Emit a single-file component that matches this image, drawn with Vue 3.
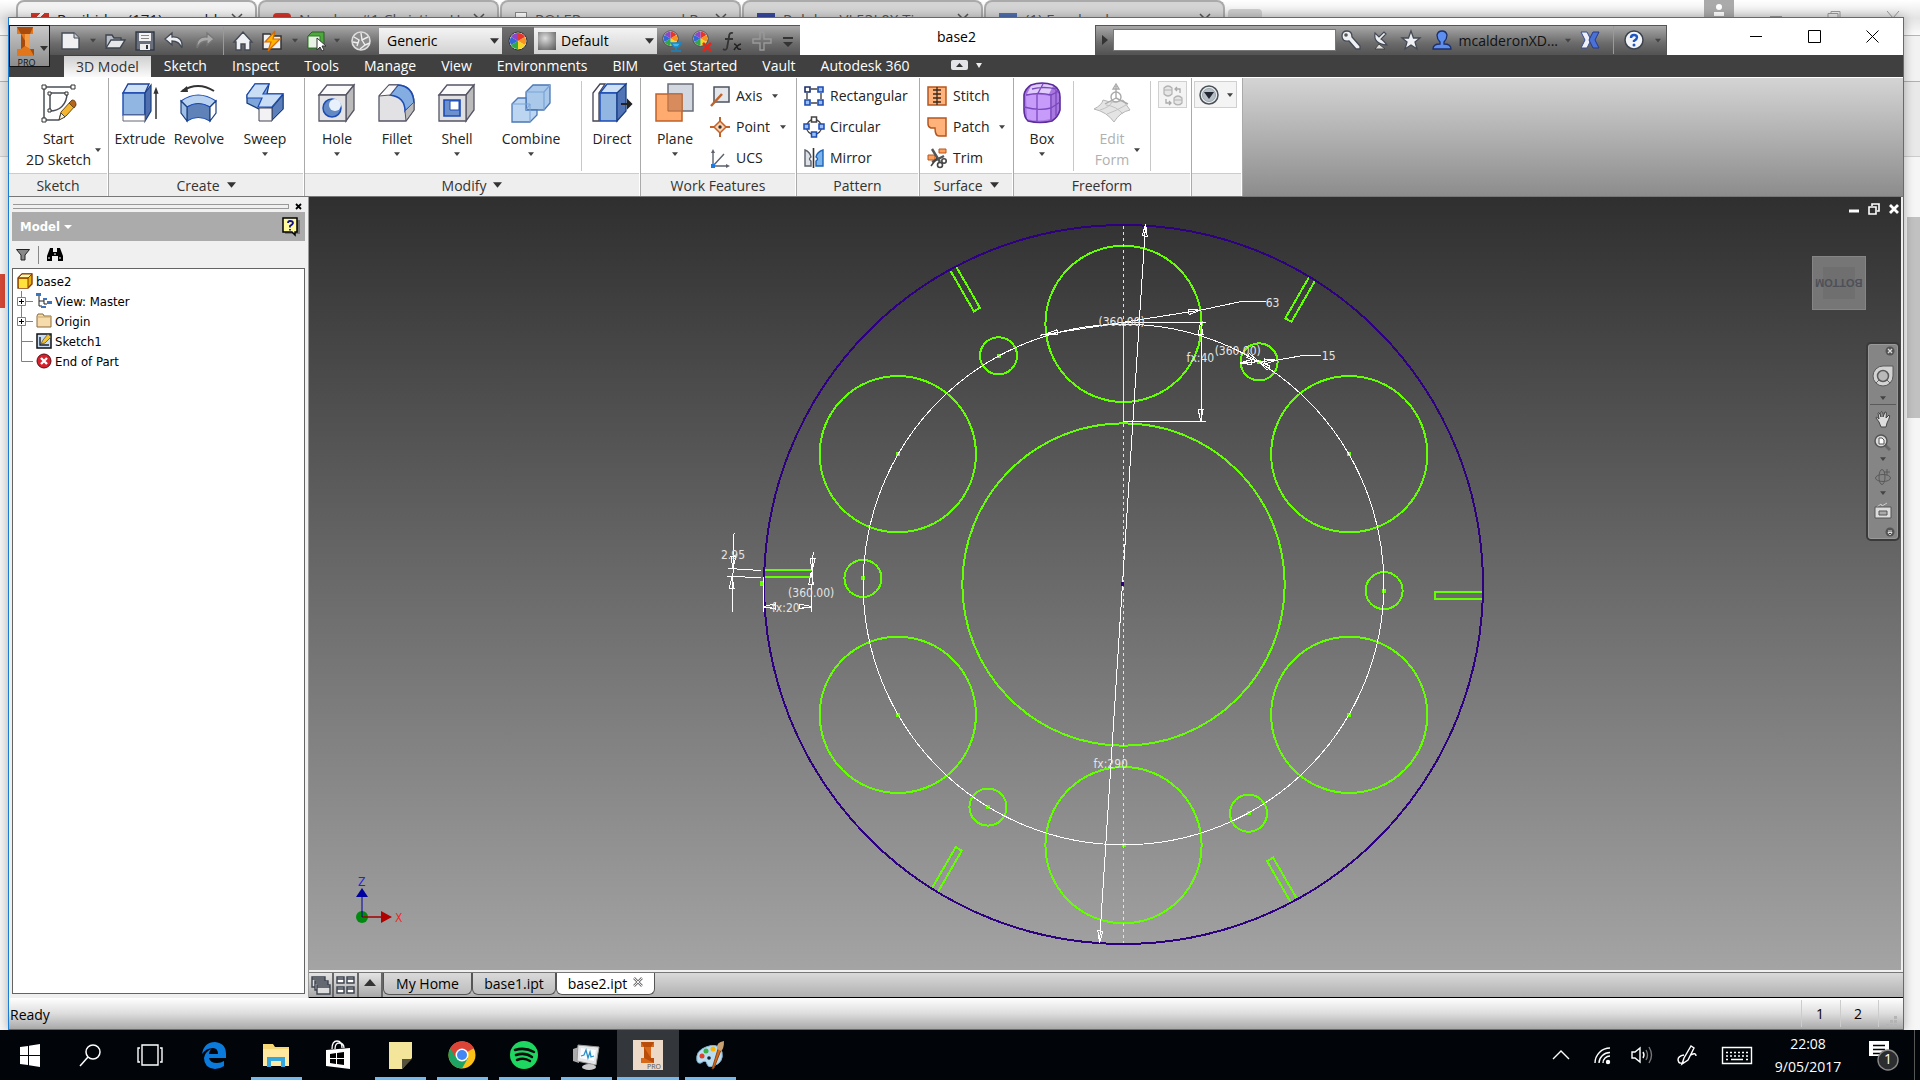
<script setup>
import { ref } from 'vue'

const material = ref('Generic')
const appearance = ref('Default')
const query = ref('')

const icons = {
  start: '<g fill="none" stroke="#4a4f58" stroke-width="1.5"><path d="M5 4H34M5 4V37M5 37H20M11 10H28M11 10V28M11 28C20 28 28 22 28 10"/></g><g fill="#fff" stroke="#333"><path d="M3 2h4v4h-4zM32 2h4v4h-4zM3 35h4v4h-4zM9 9h3v3h-3zM26 9h3v3h-3zM9 26h3v3h-3z"/></g><path d="M20 37l2-8 10-11 5 4-10 11z" fill="#f5b52c" stroke="#6b4a12"/><path d="M30 20l3-3q4 0 4 5l-2 3z" fill="#b5651d" stroke="#6b4a12"/><path d="M20 37l2-7 4 4z" fill="#fff2c8" stroke="#444"/>',
  extrude: '<path d="M3 10L8 1H29L25 10Z" fill="#cfe1f5" stroke="#1c3f9c" stroke-width="1.4"/><path d="M3 10H25V32H3Z" fill="#92b6e2" stroke="#1c4bb5" stroke-width="1.4"/><path d="M25 10L31 2V28L25 38Z" fill="#4f6fae" stroke="#1c3f7c" stroke-width="1.2"/><path d="M3 32H25V38H3Z" fill="#fff" stroke="#667"/><path d="M36 36V7M34.500 10l1.500-4 1.500 4z" stroke="#333" stroke-width="1.5" fill="#333"/>',
  revolve: '<path d="M3 8Q19-2 35 8" fill="none" stroke="#333" stroke-width="2"/><path d="M1 9l7-6 1 6z" fill="#333"/><path d="M2 18Q19 6 37 18L31 24Q19 17 8 24Z" fill="#b9d2ef" stroke="#1c4bb5" stroke-width="1.2"/><path d="M8 24Q19 17 31 24L31 38Q19 31 8 38Z" fill="#5f82b8" stroke="#1c4bb5" stroke-width="1.2"/><path d="M2 18L8 24V38L2 30Z" fill="#9fbfe6" stroke="#1c3f7c" stroke-width="1.2"/><path d="M37 18L31 24V38L37 30Z" fill="#fff" stroke="#1c3f7c" stroke-width="1.2"/>',
  sweep: '<path d="M2 12L10 1H24L22 11H38V26L27 37V25L14 26L2 20Z" fill="#7ea6da" stroke="#1c3f7c" stroke-width="1.3"/><path d="M2 12L10 1H24L18 11H38L27 24H13L17 15H2Z" fill="#c9def5" stroke="#1c4bb5" stroke-width="1.2"/><path d="M27 25L38 12V26L27 37Z" fill="#5b7fbb" stroke="#1c3f7c"/><path d="M14 25H27V38H14Z" fill="#f2f2f4" stroke="#445"/>',
  hole: '<path d="M2 12L10 2H37L29 12Z" fill="#fafafa" stroke="#556" stroke-width="1.3"/><path d="M29 12L37 2V27L29 38Z" fill="#bbb" stroke="#556" stroke-width="1.3"/><path d="M2 12H29V38H2Z" fill="#e4e4e6" stroke="#556" stroke-width="1.3"/><circle cx="15" cy="25" r="9" fill="#6289c4" stroke="#1c4bb5" stroke-width="1.5"/><circle cx="18" cy="22" r="6" fill="#e8f1fb"/>',
  fillet: '<path d="M2 13L12 2H20Q37 3 37 20V27L29 38H2Z" fill="#e2e2e4" stroke="#556" stroke-width="1.3"/><path d="M13 12L21 2Q36 3 37 20L28 28Q28 14 13 12Z" fill="#84aee2" stroke="#1c4bb5" stroke-width="1.5"/><path d="M28 28L37 19V27L29 38Z" fill="#bbb" stroke="#556"/><path d="M2 13L12 2H21L13 12Z" fill="#fafafa" stroke="#556"/>',
  shell: '<path d="M2 12L10 2H37L29 12Z" fill="#fafafa" stroke="#556" stroke-width="1.3"/><path d="M29 12L37 2V27L29 38Z" fill="#bbb" stroke="#556" stroke-width="1.3"/><path d="M2 12H29V38H2Z" fill="#e0e0e3" stroke="#556" stroke-width="1.3"/><path d="M7 17H23V33H7Z" fill="#6c90cc" stroke="#1c4bb5" stroke-width="1.6"/><path d="M13 18H22V27H13Z" fill="#fff" stroke="#1c4bb5"/>',
  combine: '<path d="M15 9L22 2H39V20L33 27H15Z" fill="#a9c8ea" stroke="#4b77b5" stroke-width="1.3"/><path d="M15 9H33V27M33 9L39 2" fill="none" stroke="#7ba3d6" stroke-width="1.2"/><path d="M1 21L7 15H15V27H26V32L19 39H1Z" fill="#bcd5f0" stroke="#4b77b5" stroke-width="1.3"/><path d="M1 21H19V39M19 21L15 27" fill="none" stroke="#7ba3d6"/>',
  direct: '<path d="M1 10L8 1H13L7 10V38H1Z" fill="#fff" stroke="#445" stroke-width="1.3"/><path d="M8 10L15 1H34L29 10Z" fill="#cfe1f5" stroke="#1c4bb5" stroke-width="1.4"/><path d="M8 10H25V38H8Z" fill="#92b6e2" stroke="#1c4bb5" stroke-width="1.4"/><path d="M25 10L34 1V28L25 38Z" fill="#5074b5" stroke="#1c3f7c" stroke-width="1.3"/><path d="M29 21H36M36 18l3 3-3 3z" stroke="#222" stroke-width="2.2" fill="#222"/>',
  plane: '<path d="M13 1H38V28H13Z" fill="#d3d7df" stroke="#6a6e78" stroke-width="1.5"/><path d="M1 11H27V38H1Z" fill="#ff9f5c" fill-opacity=".88" stroke="#c0622a" stroke-width="1.5"/><path d="M13 11H27V28H13Z" fill="#d88c5e" stroke="#b06a40"/>',
  box: '<path d="M9 2Q20-2 31 2Q38 6 38 14V27Q36 34 30 38Q18 41 6 38Q2 34 2 27V12Q3 6 9 2Z" fill="#a878e0" stroke="#5b2c9c" stroke-width="1.6"/><path d="M9 3Q20-1 31 3L27 11H5Z" fill="#e0ccfa"/><path d="M4 13Q15 10 28 13V36Q16 39 5 36Z" fill="#c79bfa"/><path d="M2 24Q17 28 29 25L38 19M15 12V38M29 11V37M4 12Q18 9 29 12L37 8M15 12L21 1M10 6Q22 3 34 6M34 7V33" fill="none" stroke="#7a48bd" stroke-width="1.3"/>',
  form: '<path d="M2 26Q10 22 11 17Q22 21 31 17L38 27Q28 29 22 39Q15 29 2 26Z" fill="#e4e4e4" stroke="#b5b5b5"/><path d="M8 27Q18 24 20 19M31 31Q24 23 14 22M15 31Q24 28 34 22" fill="none" stroke="#c2c2c2"/><g fill="none" stroke="#aaa" stroke-width="1.4"><path d="M24 15V3M21 6l3-5 3 5zM24 15L13 21M24 15L36 21"/><circle cx="24" cy="14" r="5"/></g>',
  axis: '<path d="M4 1H19V16H4Z" fill="#e3e6ea" stroke="#4d545f" stroke-width="1.5"/><path d="M1 20L12 8" stroke="#c0622a" stroke-width="2.5"/>',
  point: '<path d="M10 4L16 10L10 16L4 10Z" fill="#ffd3b0" stroke="#c0622a" stroke-width="1.5"/><path d="M10 0V5M10 15V20M0 10H5M15 10H20" stroke="#c0622a" stroke-width="2"/><circle cx="10" cy="10" r="1.7" fill="#333"/>',
  ucs: '<path d="M3 18V3M3 18H18M3 18L14 6" fill="none" stroke="#5b626d" stroke-width="1.4"/><path d="M1 5l2-4 2 4zM16 16l4 2-4 2z" fill="#5b626d"/><path d="M1 16H5V20H1Z" fill="#1d7ae0"/>',
  rectangular: '<path d="M7 3H13M3 7V13M17 7V13M7 17H13" stroke="#444" stroke-width="1.4"/><g fill="#fff" stroke="#1c4bb5" stroke-width="1.6"><path d="M1 1H6V6H1Z" stroke="#1b2e6b"/><path d="M14 1H19V6H14ZM1 14H6V19H1ZM14 14H19V19H14Z" fill="#9cc0ee"/></g>',
  circular: '<circle cx="10" cy="10" r="7.5" fill="none" stroke="#444" stroke-width="1.3"/><g fill="#9cc0ee" stroke="#1c4bb5" stroke-width="1.5"><path d="M7.500 0H12.500V5H7.500Z" fill="#fff" stroke="#444"/><path d="M0 7H5V12H0ZM15 7H20V12H15ZM7.500 15H12.500V20H7.500Z"/></g>',
  mirror: '<path d="M1 2Q6 4 7 9Q4 11 7 13V18H1Z" fill="#dde0e4" stroke="#59606b" stroke-width="1.4"/><path d="M19 2Q13 4 12 9Q15 11 12 13V18H19Z" fill="#7cb4ec" stroke="#1c62b5" stroke-width="1.4"/><path d="M9.500 0V20" stroke="#333" stroke-width="1.6"/>',
  stitch: '<path d="M1 1H19V19H1Z" fill="#ffb27a" stroke="#b5561e" stroke-width="1.5"/><path d="M10 1V19M6 4H14M6 8H14M6 12H14M6 16H14" stroke="#3b2a1e" stroke-width="1.3"/>',
  patch: '<path d="M1 1H19V19H12Q8 19 8 11H4Q1 10 1 7Z" fill="#ffb27a" stroke="#b5561e" stroke-width="1.5"/>',
  trim: '<path d="M12 1H19V5H12ZM1 7H8V12H1Z" fill="#ff9f5c" stroke="#b5561e"/><path d="M5 1L13 14M17 8L5 14" stroke="#555" stroke-width="2.4"/><g fill="none" stroke="#444" stroke-width="1.6"><circle cx="13" cy="17" r="2.500"/><circle cx="17" cy="13" r="2.200"/><path d="M4 18L10 10"/></g>',
  convert: '<g fill="#e6e6e6" stroke="#b3b3b3" stroke-width="1.2"><path d="M1 3Q5-1 9 3V9Q5 13 1 9ZM1 5H9M11 13Q15 9 19 13V18Q15 22 11 18ZM11 15H19"/></g><path d="M12 4H17V8M14 2L12 4L14 6M3 14V18H8M6 16L8 18L6 20" fill="none" stroke="#aaa" stroke-width="1.3"/>',
  filterdown: '<circle cx="10" cy="10" r="9" fill="#e8ebef" stroke="#4a5058" stroke-width="1.5"/><circle cx="10" cy="10" r="6.500" fill="#b9bfc8" stroke="#9aa"/><path d="M5 7H15L10 14Z" fill="#222833"/>',
  new: '<path d="M2 2H14L19 7V18H2Z" fill="#f0f0f2" stroke="#444a55" stroke-width="1.4"/><path d="M14 2V7H19" fill="#c9ccd2" stroke="#444a55"/>',
  open: '<path d="M1 16V4H7L9 7H16V9" fill="#b9bdc6" stroke="#3e444f" stroke-width="1.4"/><path d="M1 17L6 9H20L15 17Z" fill="#e5e7eb" stroke="#3e444f" stroke-width="1.4"/>',
  save: '<path d="M1 1H19V19H1Z" fill="#6a707b" stroke="#333a45" stroke-width="1.4"/><path d="M4 2H16V10H4Z" fill="#f3f3f3"/><path d="M6 4.500H14M6 7.500H14" stroke="#888"/><path d="M5 13H15V19H5Z" fill="#eee"/><path d="M11 14H13V18H11Z" fill="#333"/>',
  undo: '<path d="M1 8L8 2V6Q19 5 18 17Q15 10 8 10V14Z" fill="#eef0f3" stroke="#444a55" stroke-width="1.3"/>',
  redo: '<path d="M19 8L12 2V6Q1 5 2 17Q5 10 12 10V14Z" fill="#a9a9a9" stroke="#777" stroke-width="1.3"/>',
  home: '<path d="M1 11L10 1L19 11H17V19H12V13H8V19H3V11Z" fill="#f0f1f4" stroke="#444a55" stroke-width="1.4"/>',
  bolt: '<path d="M1 3H8L10 5H19V18H1Z" fill="#f1f1f1" stroke="#333" stroke-width="1.500"/><path d="M13 0L3 11H9L6 20L18 8H11Z" fill="#ffb400" stroke="#d46a00" stroke-width="1.2"/>',
  pick: '<path d="M1 5L5 1H17V13L13 17H1Z" fill="#4caa3c" stroke="#2b5c22"/><path d="M1 5H13V17H1Z" fill="#e8f2e5" stroke="#2b7c22"/><path d="M10 7V19L13 16L15 20L17 19L15 15H19Z" fill="#fff" stroke="#333"/>',
  sphere: '<circle cx="10" cy="10" r="9" fill="#8d8d8d" stroke="#ddd" stroke-width="1.6"/><path d="M3 6L8 9L6 15M10 2L11 9L17 6M11 9L14 14L9 18M14 14L19 12M2 11L7 12" stroke="#eee" stroke-width="1.4" fill="none"/>',
  wheel: '<circle cx="10" cy="10" r="9" fill="#eee" stroke="#333"/><path d="M10 10V2A8 8 0 0 1 17 6Z" fill="#e8342a"/><path d="M10 10L17 6A8 8 0 0 1 17 14Z" fill="#f8941e"/><path d="M10 10L17 14A8 8 0 0 1 10 18Z" fill="#f5d623"/><path d="M10 10V18A8 8 0 0 1 3 14Z" fill="#2fa845"/><path d="M10 10L3 14A8 8 0 0 1 3 6Z" fill="#3467d6"/><path d="M10 10L3 6A8 8 0 0 1 10 2Z" fill="#8c46c8"/>',
  fx: '<path d="M11 2Q7 1 7 6L5 17Q4 20 1 18M3 8H11" stroke="#333" stroke-width="1.8" fill="none"/><path d="M12 13Q14 13 15 16Q16 19 19 18M19 13Q15 14 12 19" stroke="#222" stroke-width="1.5" fill="none"/>',
  plus: '<path d="M8 1H12V8H19V12H12V19H8V12H1V8H8Z" fill="none" stroke="#999" stroke-width="1.4"/>',
  overflow: '<path d="M5 6H15V8H5ZM5 11H15L10 16Z" fill="#333"/>',
  key: '<path d="M1 6Q1 1 6 1Q11 1 11 7L19 16V19H15L8 11Q1 12 1 6Z" fill="#eef0f3" stroke="#444a55" stroke-width="1.3"/><circle cx="5" cy="5" r="1.800" fill="#555"/>',
  dish: '<path d="M4 3Q2 14 16 15Q12 10 10 9L15 4L13 2L8 7Z" fill="#eef0f3" stroke="#444a55" stroke-width="1.2"/><path d="M4 19L8 14L14 19Z" fill="#ddd" stroke="#444"/>',
  star: '<path d="M10 1L12.500 8H19L14 12L16 19L10 15L4 19L6 12L1 8H7.500Z" fill="#eef0f3" stroke="#444a55" stroke-width="1.3"/>',
  user: '<path d="M1 19Q1 14 8 14V12Q5 9 5 5Q6 1 10 1Q14 1 15 5Q15 9 12 12V14Q19 14 19 19Z" fill="#5c8ff0" stroke="#1c2f6c" stroke-width="1.3"/>',
  exchange: '<path d="M1 2H7L11 10L7 18H1L5 10Z" fill="#eef0f6" stroke="#334b94"/><path d="M19 2H13L9 10L13 18H19L15 10Z" fill="#4a72d6" stroke="#24398a"/>',
  help: '<circle cx="10" cy="10" r="9" fill="#f3f5f8" stroke="#3c424d" stroke-width="1.5"/><path d="M7 8Q7 5 10 5Q13 5 13 7.500Q13 9 10 11V12" stroke="#1f55c0" stroke-width="2.400" fill="none"/><circle cx="10" cy="15" r="1.500" fill="#1f55c0"/>',
  part: '<path d="M1 5L5 1H15V11L11 15H1Z" fill="#e8b400" stroke="#8c3a00" stroke-width="1.400"/><path d="M1 5L5 1H15L11 5Z" fill="#fff8b0" stroke="#8c3a00"/><path d="M2 6H11V15H2Z" fill="#ffe23c"/><path d="M11 5V15M1 5H11" stroke="#8c3a00" fill="none"/>',
  view: '<path d="M1 1H5M3 2V13H6M3 8H8M8 6V11M8 11H11" stroke="#222" fill="none"/><path d="M0 0H5V3H0ZM7 5H11V7H7ZM11 8H16V11H11ZM5 13H10V15H5Z" fill="#3c74c0"/>',
  folder: '<path d="M1 14V3L2 1H7L8 3H15V14Z" fill="#f5dcaa" stroke="#8c6a3c"/><path d="M1 4H15" stroke="#c9a56a"/>',
  sketch: '<path d="M1 1H15V15H1Z" fill="#c9dcf5" stroke="#111" stroke-width="1.500"/><path d="M4 4V12H13" stroke="#222" fill="none" stroke-width="1.400"/><path d="M5 11L7 7L12 1L15 4L9 10Z" fill="#f5c52c" stroke="#555" stroke-width=".800"/>',
  end: '<circle cx="8" cy="8" r="7" fill="#d8202c" stroke="#5a0d14"/><path d="M5 5L11 11M11 5L5 11" stroke="#fff" stroke-width="2.400"/>',
}

const caret = 'M0 0H8L4 5Z'

const menuTabs = ['3D Model', 'Sketch', 'Inspect', 'Tools', 'Manage', 'View', 'Environments', 'BIM', 'Get Started', 'Vault', 'Autodesk 360']

const quick = [
  { i: 'new', w: 40, label: 'New' }, { caret: true, w: 6, label: 'New menu' },
  { i: 'open', w: 38, label: 'Open' }, { i: 'save', w: 22, label: 'Save' },
  { i: 'undo', w: 36, label: 'Undo' }, { i: 'redo', w: 25, label: 'Redo' }, { sep: true, w: 12 },
  { i: 'home', w: 28, label: 'Home' }, { i: 'bolt', w: 30, label: 'Local Update' }, { caret: true, w: 16, label: 'Update menu' },
  { i: 'pick', w: 28, label: 'Select' }, { caret: true, w: 12, label: 'Select menu' }, { i: 'sphere', w: 36, label: 'Material' },
]

const panels = [
  { name: 'Sketch', w: 100, big: [{ i: 'start', t: ['Start', '2D Sketch'], w: 100, side: true }] },
  { name: 'Create', w: 196, more: true, pad: 4, big: [{ i: 'extrude', t: ['Extrude'], w: 54 }, { i: 'revolve', t: ['Revolve'], w: 64 }, { i: 'sweep', t: ['Sweep'], w: 68, arrow: true }] },
  { name: 'Modify', w: 336, more: true, pad: 2, big: [{ i: 'hole', t: ['Hole'], w: 60, arrow: true }, { i: 'fillet', t: ['Fillet'], w: 60, arrow: true }, { i: 'shell', t: ['Shell'], w: 60, arrow: true }, { i: 'combine', t: ['Combine'], w: 88, arrow: true }, { sep: true, apart: true }, { i: 'direct', t: ['Direct'], w: 54 }] },
  { name: 'Work Features', w: 156, pad: 2, big: [{ i: 'plane', t: ['Plane'], w: 64, arrow: true }], small: [{ i: 'axis', t: 'Axis', arrow: true }, { i: 'point', t: 'Point', arrow: true }, { i: 'ucs', t: 'UCS' }] },
  { name: 'Pattern', w: 123, pad: 4, small: [{ i: 'rectangular', t: 'Rectangular' }, { i: 'circular', t: 'Circular' }, { i: 'mirror', t: 'Mirror' }] },
  { name: 'Surface', w: 94, more: true, pad: 4, small: [{ i: 'stitch', t: 'Stitch' }, { i: 'patch', t: 'Patch', arrow: true }, { i: 'trim', t: 'Trim' }] },
  { name: 'Freeform', w: 178, pad: 0, big: [{ i: 'box', t: ['Box'], w: 56, arrow: true }, { sep: true }, { i: 'form', t: ['Edit', 'Form'], w: 70, side: true, off: true }, { sep: true }], tool: 'convert' },
  { name: '', w: 51, pad: 2, tool: 'filterdown', toolArrow: true },
]

const tree = [
  { i: 'view', t: 'View: Master', plus: true },
  { i: 'folder', t: 'Origin', plus: true },
  { i: 'sketch', t: 'Sketch1' },
  { i: 'end', t: 'End of Part', last: true },
]

const CX = 1124
const CY = 585
const turn = (r, deg) => ({ x: CX + r * Math.cos(deg * Math.PI / 180), y: CY + r * Math.sin(deg * Math.PI / 180) })
const steps = [0, 60, 120, 180, 240, 300]
const bigHoles = steps.map(a => turn(260.3, a + 30))
const smallHoles = steps.map(a => turn(260.3, a + 1.34))

const arrows = [
  [1146, 225, -86], [1100, 943, 94], [1046, 335, 171], [1201, 311, -9],
  [1201, 323, -90], [1201, 422, 90], [1240, 364, 174], [1277, 361, -6],
  [1259, 362, 28], [1259, 362, 215], [734, 569, 92], [733, 577, -88],
  [813, 571, 92], [812, 573, -90], [764, 607, 180], [812, 607, 0],
]
const notes = [
  ['63', 1266, 308], ['15', 1322, 361], ['(360.00)', 1099, 327], ['(360.00)', 1215, 356],
  ['fx:40', 1187, 363], ['fx:290', 1094, 768], ['2.95', 722, 560], ['(360.00)', 789, 597], ['fx:20', 773, 612],
]

const backTabs = [
  { t: 'Recibidos (171) - mcalde', on: true, c: 'gmail' },
  { t: 'Number #1 Christian Hits', c: 'yt' },
  { t: 'POLER - surseo coord Rol', c: 'doc' },
  { t: 'Pololu - VL53L0X Time-of', c: 'pol' },
  { t: '(1) Facebook', c: 'fb' },
]

const apps = [
  { n: 'Start', s: '<path d="M1 6L9 5V14H1ZM10 4.800L21 3V14H10ZM1 15H9V24L1 23ZM10 15H21V26L10 24.200Z" fill="#fff" transform="translate(3 0)"/>', w: 60 },
  { n: 'Search', s: '<circle cx="17" cy="11" r="7" fill="none" stroke="#fff" stroke-width="1.500"/><path d="M12 16L4 25" stroke="#fff" stroke-width="1.500"/>', w: 60 },
  { n: 'Task View', s: '<path d="M6 4H22V24H6ZM4 7H2V21H4M24 7H26V21H24" fill="none" stroke="#fff" stroke-width="1.400"/>', w: 60 },
  { n: 'Edge', s: '<path d="M2 13Q4 1 15 1Q26 2 26 13V17H9Q10 22 17 22Q21 22 24 20V25Q20 28 15 28Q4 27 4 17Q5 11 11 8Q9 11 9 13H18Q18 7 13 7Q6 7 2 13Z" fill="#0a7bdc"/>' },
  { n: 'File Explorer', run: true, s: '<path d="M1 3H11L13 6H27V25H1Z" fill="#f7d774"/><path d="M1 8H27V25H1Z" fill="#ffe9a0"/><path d="M5 26V16H23V26H19V20H9V26Z" fill="#35a7e0"/>' },
  { n: 'Store', s: '<path d="M2 9L26 7V28L2 25Z" fill="#fff"/><path d="M8 8Q8 0 13 0Q18 0 18 7M11 8Q11 2 15 2Q20 2 20 7" fill="none" stroke="#fff" stroke-width="1.300"/><path d="M6 13L12 12V17H6ZM13 12L20 11V17H13ZM6 18H12V23L6 22ZM13 18H20V24L13 23Z" fill="#000"/>' },
  { n: 'Sticky Notes', run: true, s: '<path d="M3 1H26V17L16 28H3Z" fill="#f3e69a"/><path d="M16 28V18H26Z" fill="#55513a"/>' },
  { n: 'Chrome', run: true, s: '<circle cx="14" cy="14" r="13.500" fill="#fbc116"/><path d="M14 14L2.300 7.300A13.500 13.500 0 0 1 25.700 7.300Z" fill="#db4437"/><path d="M14 14L2.300 7.300A13.500 13.500 0 0 0 14 27.500L20 17Z" fill="#1da462"/><path d="M14 7.500H26A13.500 13.500 0 0 0 2.300 7.300L8 17A6.500 6.500 0 0 1 14 7.500Z" fill="#db4437"/><circle cx="14" cy="14" r="6.500" fill="#fff"/><circle cx="14" cy="14" r="5" fill="#4486f4"/>' },
  { n: 'Spotify', run: true, s: '<circle cx="14" cy="14" r="14" fill="#1ed760"/><path d="M5 9Q15 6 24 11M6 14Q15 11 22 16M7 19Q14 16 20 20" fill="none" stroke="#0b0b0b" stroke-width="2.500" stroke-linecap="round"/>' },
  { n: 'Monitor', run: true, s: '<path d="M1 8L7 6V22L1 20Z" fill="#aaa"/><path d="M6 4L27 6L24 24L5 20Z" fill="#e4e6e8" stroke="#999"/><path d="M9 7L24 9L22 20L8 17Z" fill="#f8fbff"/><path d="M9 15L12 14L14 9L16 17L18 11L19 16L22 15" fill="none" stroke="#2a8ec8" stroke-width="1.300"/><ellipse cx="17" cy="26" rx="7" ry="3" fill="#ccc"/>' },
  { n: 'Inventor', run: true, active: true, s: '<path d="M-1-1H29V29H-1Z" fill="#ecd9c8"/><path d="M7 1H20V6H17V17H20V22H7V17H10V6H7Z" fill="#d9691a"/><path d="M7 1L10 6H17L20 1ZM10 6L17 17H20V22L10 17Z" fill="#b84c0a"/>', pro: true },
  { n: 'Paint', run: true, s: '<path d="M1 20Q-1 10 10 6Q22 1 26 11Q28 22 17 25Q12 27 11 23Q10 18 5 22Q2 23 1 20Z" fill="#b9dcf0" stroke="#7fb2d0"/><circle cx="6" cy="15" r="2.500" fill="#e0402c"/><circle cx="10" cy="10" r="2.500" fill="#3cb043"/><circle cx="17" cy="8" r="2.500" fill="#ffb400"/><circle cx="13" cy="17" r="1.800" fill="#123"/><path d="M16 28L22 8L25 9L18 27Z" fill="#d9691a" stroke="#8c4510"/><path d="M21 8Q20 1 28 0Q28 8 25 10Z" fill="#c9a070"/>' },
]
</script>

<template>
  <div class="desktop">
    <div class="back" aria-hidden="true">
      <div class="back-tabs">
        <div v-for="b in backTabs" :key="b.t" class="back-tab" :class="{ on: b.on }">
          <i class="fav" :class="b.c"></i><span class="bt">{{ b.t }}</span><svg class="bx" width="12" height="12" viewBox="0 0 12 12"><path d="M1 1L11 11M11 1L1 11" stroke="#555" stroke-width="1.500" /></svg>
        </div>
        <div class="back-new"></div>
        <div class="back-fill"></div>
        <div class="back-user"><svg width="12" height="12" viewBox="0 0 12 12"><circle cx="6" cy="3" r="3" fill="#fff" /><path d="M1 12V8H11V12Z" fill="#fff" /></svg></div>
        <svg class="back-ctl" width="140" height="20" viewBox="0 0 140 20" fill="none" stroke="#999"><path d="M0 16.500H12M58 20V13.500H68V20M61 13V11.500H70V20M117 11L123 18L129 11" /></svg>
      </div>
      <div class="back-bar"></div><div class="back-bar two"></div><div class="back-page"><i class="mark"></i><i class="thumb"></i></div>
    </div>

    <div class="win">
      <header class="title">
        <button class="app-btn" aria-label="Application menu">
          <svg width="22" height="32" viewBox="0 0 22 32"><path d="M1 1H17V8H14V23H18V30H1V23H5V8H1Z" fill="#e2761b" /><path d="M1 1L5 8H14L17 1ZM5 8L14 23L18 30V23H14L9 20L5 23Z" fill="#a84a0c" /><path d="M9 8H14V23L9 20Z" fill="#f59a45" /></svg>
          <span>PRO</span>
          <svg class="app-caret" width="8" height="5"><path :d="caret" fill="#333" /></svg>
        </button>
        <div class="qat">
          <template v-for="(q, n) in quick" :key="n">
            <i v-if="q.sep" class="qsep"></i>
            <button v-else class="qb" :style="{ width: q.w + 'px' }" :aria-label="q.label">
              <svg v-if="q.caret" width="6" height="5" viewBox="0 0 8 5"><path :d="caret" fill="#444" /></svg>
              <svg v-else width="20" height="20" viewBox="0 0 20 20" v-html="icons[q.i]"></svg>
            </button>
          </template>
          <label class="combo"><select v-model="material" aria-label="Material"><option>Generic</option></select><svg width="9" height="6" viewBox="0 0 8 5"><path :d="caret" fill="#333" /></svg></label>
          <button class="qb dark" aria-label="Appearance"><svg width="20" height="20" viewBox="0 0 20 20" v-html="icons.wheel"></svg></button>
          <label class="combo ball"><i class="orb"></i><select v-model="appearance" aria-label="Appearance"><option>Default</option></select><svg width="9" height="6" viewBox="0 0 8 5"><path :d="caret" fill="#333" /></svg></label>
          <button class="qb w30" aria-label="Adjust"><svg width="20" height="22" viewBox="0 0 20 22"><g transform="scale(.85)" v-html="icons.wheel"></g><path d="M9 13H19L16 17H12ZM14 17V20M9 21H19" fill="#4ab8ea" stroke="#1488c8" stroke-width="1.500" /></svg></button>
          <button class="qb w30" aria-label="Clear"><svg width="20" height="22" viewBox="0 0 20 22"><g transform="scale(.85)" v-html="icons.wheel"></g><path d="M11 13L19 21M19 13L11 21" stroke="#e0281c" stroke-width="2.500" /></svg></button>
          <button class="qb w30" aria-label="Parameters"><svg width="20" height="20" viewBox="0 0 20 20" v-html="icons.fx"></svg></button>
          <button class="qb w30" aria-label="Add"><svg width="20" height="20" viewBox="0 0 20 20" v-html="icons.plus"></svg></button>
          <button class="qb w22" aria-label="Customize"><svg width="20" height="20" viewBox="0 0 20 20" v-html="icons.overflow"></svg></button>
        </div>
        <h1>base2</h1>
        <div class="info">
          <button class="qb w16" aria-label="Expand"><svg width="6" height="10"><path d="M0 0L6 5L0 10Z" fill="#333" /></svg></button>
          <input v-model="query" class="search" aria-label="Search" />
          <button class="qb w30" aria-label="Sign key"><svg width="20" height="20" viewBox="0 0 20 20" v-html="icons.key"></svg></button>
          <button class="qb w30" aria-label="Communication"><svg width="20" height="20" viewBox="0 0 20 20" v-html="icons.dish"></svg></button>
          <button class="qb w30" aria-label="Favourites"><svg width="20" height="20" viewBox="0 0 20 20" v-html="icons.star"></svg></button>
          <button class="qb user"><svg width="20" height="20" viewBox="0 0 20 20" v-html="icons.user"></svg><span>mcalderonXD...</span><svg width="6" height="5" viewBox="0 0 8 5"><path :d="caret" fill="#444" /></svg></button>
          <button class="qb w34" aria-label="Exchange"><svg width="20" height="20" viewBox="0 0 20 20" v-html="icons.exchange"></svg></button>
          <i class="qsep"></i>
          <button class="qb w30" aria-label="Help"><svg width="20" height="20" viewBox="0 0 20 20" v-html="icons.help"></svg></button>
          <button class="qb w16" aria-label="Help menu"><svg width="6" height="5" viewBox="0 0 8 5"><path :d="caret" fill="#444" /></svg></button>
        </div>
        <div class="ctl">
          <button aria-label="Minimize"><svg width="13" height="13"><path d="M0 6.500H12" /></svg></button>
          <button aria-label="Maximize"><svg width="13" height="13"><path d="M.5 .5H12.500V12.500H.5Z" /></svg></button>
          <button aria-label="Close"><svg width="13" height="13"><path d="M.5 .5L12.500 12.500M12.500 .5L.5 12.500" /></svg></button>
        </div>
      </header>

      <nav class="menu">
        <button v-for="(m, n) in menuTabs" :key="m" :class="{ on: n === 0 }">{{ m }}</button>
        <button class="mini" aria-label="Ribbon display"><svg width="32" height="10"><rect x="0" y="0" width="17" height="10" rx="2" fill="#e4e4e8" /><path d="M5 7L8.500 3L12 7Z" fill="#333" /><path d="M25 3H31L28 8Z" fill="#eee" /></svg></button>
      </nav>

      <section class="ribbon">
        <div v-for="(p, n) in panels" :key="n" class="panel" :style="{ width: p.w + 'px' }">
          <div class="body" :style="{ paddingLeft: (p.pad || 0) + 'px' }">
            <template v-for="(b, k) in p.big || []" :key="k">
              <i v-if="b.sep" class="bsep" :class="{ apart: b.apart }"></i>
              <button v-else class="big" :class="{ off: b.off }" :style="{ width: b.w + 'px' }">
                <svg width="40" height="40" viewBox="0 0 40 40" v-html="icons[b.i]"></svg>
                <span v-for="t in b.t" :key="t">{{ t }}</span>
                <svg v-if="b.arrow || b.side" :class="b.side ? 'side' : 'under'" width="6" height="4" viewBox="0 0 8 5"><path :d="caret" fill="#444" /></svg>
              </button>
            </template>
            <div v-if="p.small" class="stack">
              <button v-for="s in p.small" :key="s.t" class="small">
                <svg width="20" height="20" viewBox="0 0 20 20" v-html="icons[s.i]"></svg><span>{{ s.t }}</span>
                <svg v-if="s.arrow" width="6" height="4" viewBox="0 0 8 5"><path :d="caret" fill="#444" /></svg>
              </button>
            </div>
            <button v-if="p.tool" class="tool" :class="{ wide: p.toolArrow }" :aria-label="p.tool">
              <svg width="20" height="20" viewBox="0 0 20 20" v-html="icons[p.tool]"></svg>
              <svg v-if="p.toolArrow" width="6" height="4" viewBox="0 0 8 5"><path :d="caret" fill="#444" /></svg>
            </button>
          </div>
          <div class="name">{{ p.name }}<svg v-if="p.more" width="9" height="6" viewBox="0 0 8 5"><path :d="caret" fill="#333" /></svg></div>
        </div>
      </section>

      <main class="work">
        <aside class="browser">
          <div class="grip"><i></i><button aria-label="Close panel"><svg width="7" height="7"><path d="M1 1L6 6M6 1L1 6" stroke="#000" stroke-width="1.800" /></svg></button></div>
          <div class="bhead"><button class="btitle">Model<svg width="8" height="4" viewBox="0 0 8 4"><path d="M0 0H8L4 4Z" fill="#fff" /></svg></button>
            <button class="qmark" aria-label="Help"><svg width="18" height="19"><path d="M3 3H18V17H3Z" fill="#777" /><path d="M1 1H15V15H13V18L10 15H1Z" fill="#fffb9c" stroke="#000" stroke-width="1.500" /><path d="M6 6Q6 4 8 4Q11 4 11 6Q11 7 8 9V10.500M8 12V13.500" stroke="#10108c" stroke-width="1.800" fill="none" /></svg></button></div>
          <div class="btools">
            <button aria-label="Filter"><svg width="14" height="12"><path d="M.5 .5H13.500L9 6V11H5V6Z" fill="#888" stroke="#222" /></svg></button><i></i>
            <button aria-label="Find"><svg width="16" height="13"><path d="M3 0H6V4H10V0H13L16 8V13H11V8H5V13H0V8Z" /><path d="M2 9V11M13 9V11M8 5V7" stroke="#fff" /></svg></button>
          </div>
          <ul class="tree">
            <li class="root"><svg width="16" height="16" viewBox="0 0 16 16" v-html="icons.part"></svg>base2</li>
            <li v-for="r in tree" :key="r.t">
              <svg class="guide" width="20" height="20" fill="none" stroke="#808080"><path :d="r.last ? 'M4.500 0V10.500H16' : 'M4.500 0V20M4.500 10.500H16'" /><g v-if="r.plus"><path d="M.5 6.500H8.500V14.500H.5Z" fill="#fff" /><path d="M2 10.500H7M4.500 8V13" stroke="#000" /></g></svg>
              <svg width="16" height="16" viewBox="0 0 16 16" v-html="icons[r.i]"></svg>{{ r.t }}
            </li>
          </ul>
        </aside>

        <div class="stage">
          <div class="canvas">
            <svg class="drawing" viewBox="309 198 1593 772" preserveAspectRatio="xMidYMid slice">
              <g fill="none" shape-rendering="crispEdges">
                <g stroke="#64ff00" stroke-width="2">
                  <circle :cx="CX" :cy="CY" r="161" />
                  <circle v-for="(h, n) in bigHoles" :key="'b' + n" :cx="h.x" :cy="h.y" r="78" />
                  <circle v-for="(h, n) in smallHoles" :key="'s' + n" :cx="h.x" :cy="h.y" r="18.500" />
                  <path v-for="a in steps" :key="'p' + a" :d="a === 180 ? 'M359 7H311M311 14H359' : 'M359 7H311V14H359'" :transform="`translate(${CX} ${CY}) rotate(${a})`" />
                </g>
                <g fill="#64ff00"><rect v-for="(h, n) in bigHoles.concat(smallHoles)" :key="'d' + n" :x="h.x - 2" :y="h.y - 2" width="4" height="4" /><rect x="761" y="582" width="3" height="4" /></g>
                <circle :cx="CX" :cy="CY" r="359" stroke="#2d0080" stroke-width="2" />
                <g stroke="#ff0"><path d="M1123.500 227V943" stroke-dasharray="3 3" /><path d="M1123.500 323V422" /></g>
                <g stroke="#fff">
                  <circle :cx="CX" :cy="CY" r="260" />
                  <path d="M1146 225L1100 943M1041 336L1201 311L1241 302.500H1266M1123 323.500H1206M1123 422.500H1206M1201.500 323V422M1240 364L1277 361L1302 356.500H1321M735 534L733 612M729 569L762 571M728 577L762 578M814 553L812 612M764.500 578V612M764 607.500H773M803 607.500H812" />
                  <path v-for="(a, n) in arrows" :key="n" d="M0 0L-12 -2.500V2.500Z" :transform="`translate(${a[0]} ${a[1]}) rotate(${a[2]})`" />
                </g>
                <rect x="1121" y="583" width="3" height="3" fill="#2d0080" />
              </g>
              <g class="note"><text v-for="(t, n) in notes" :key="n" :x="t[1]" :y="t[2]">{{ t[0] }}</text></g>
            </svg>
            <svg class="triad" width="60" height="60"><path d="M17 44V26" stroke="#0000a0" /><path d="M11 27L17 18L23 27Z" fill="#0000a0" /><circle cx="17" cy="47" r="6" fill="#008a10" /><path d="M17 47H37" stroke="#a00000" stroke-width="1.500" /><path d="M36 41L47 47L36 53Z" fill="#b00000" /><path d="M17 41V47" stroke="#0000a0" /><text x="13" y="16" fill="#2424e0">Z</text><text x="50" y="52" fill="#f02828">X</text></svg>
            <div class="mdi">
              <button aria-label="Minimize document"><svg width="12" height="12"><path d="M1 8H11" stroke="#fff" stroke-width="3" /></svg></button>
              <button aria-label="Restore document"><svg width="12" height="12" fill="none" stroke="#fff" stroke-width="1.600"><path d="M4 3V1H11V8H9M1 4H8V11H1Z" /></svg></button>
              <button aria-label="Close document"><svg width="12" height="12"><path d="M2 2L10 10M10 2L2 10" stroke="#fff" stroke-width="2.800" /></svg></button>
            </div>
            <div class="cube"><span>BOTTOM</span></div>
            <div class="navbar">
              <button class="dot end" aria-label="Close"><svg width="10" height="10"><circle cx="5" cy="5" r="4.500" fill="#555" /><path d="M3 3L7 7M7 3L3 7" stroke="#ddd" stroke-width="1.300" /></svg></button>
              <button class="wheel" aria-label="Steering wheel"><svg width="22" height="22"><path d="M11 1H21V11A10 10 0 1 1 11 1Z" fill="#d3d3d3" stroke="#5a5a5a" /><circle cx="11" cy="11" r="5.500" fill="#b9b9b9" stroke="#5a5a5a" stroke-width="1.500" /><path d="M4 18L7 15M15 15L18 18" stroke="#666" /></svg></button>
              <svg class="nc" width="6" height="4" viewBox="0 0 8 5"><path :d="caret" fill="#444" /></svg>
              <i></i>
              <button aria-label="Pan"><svg width="16" height="18" fill="#ddd" stroke="#444"><path d="M4 12L1 8Q1 6 4 9L3 3Q4 1 6 7L6 2Q8 0 8 7L10 2Q12 1 11 8L14 5Q16 5 12 13L11 17H6Z" /></svg></button>
              <button aria-label="Zoom"><svg width="18" height="18"><path d="M10 10L16 16" stroke="#666" stroke-width="3" /><circle cx="7" cy="7" r="6" fill="#ddd" stroke="#555" stroke-width="1.500" /><path d="M5 4H8L10 6V10H5Z" fill="#fff" stroke="#555" /></svg></button>
              <svg class="nc" width="6" height="4" viewBox="0 0 8 5"><path :d="caret" fill="#444" /></svg>
              <button aria-label="Orbit"><svg width="16" height="18" fill="none" stroke="#5a5a5a"><ellipse cx="8" cy="10" rx="7.500" ry="3.500" /><ellipse cx="7" cy="9" rx="3" ry="7.500" /><path d="M9 4H15M12 1V7" /></svg></button>
              <svg class="nc" width="6" height="4" viewBox="0 0 8 5"><path :d="caret" fill="#444" /></svg>
              <button aria-label="Look at"><svg width="18" height="16"><path d="M3 4L7 1L8 3L13 0" stroke="#ccc" fill="none" /><path d="M1 4H17V15H1Z" fill="#ddd" stroke="#555" /><path d="M5 8H13V12H5Z" fill="#aaa" stroke="#555" /></svg></button>
              <button class="dot foot" aria-label="Options"><svg width="10" height="10"><circle cx="5" cy="5" r="4.500" fill="#555" /><path d="M3 4H7M3 5.500H7L5 8Z" stroke="#ddd" /></svg></button>
            </div>
          </div>
          <div class="docs">
            <button class="sq" aria-label="Cascade"><svg width="20" height="20" fill="#ddd" stroke="#3c424d" stroke-width="1.400"><path d="M1 2H14V12H1ZM1 4H14" /><path d="M4 6H17V15H4ZM4 8H17" /><path d="M6 10H19V19H6ZM6 12H19" /></svg></button>
            <button class="sq" aria-label="Arrange"><svg width="20" height="20" fill="#fff" stroke="#3c424d" stroke-width="1.400"><path d="M1 2H8V8H1ZM1 4H8M11 2H18V8H11ZM11 4H18M1 12H8V18H1ZM1 14H8M11 12H18V18H11ZM11 14H18" /></svg></button>
            <button class="sq up" aria-label="Scroll tabs"><svg width="12" height="7"><path d="M0 7L6 0L12 7Z" fill="#333" /></svg></button>
            <button class="doc t1">My Home</button>
            <button class="doc t2">base1.ipt</button>
            <button class="doc on">base2.ipt<svg width="10" height="10"><path d="M1 1L9 9M9 1L1 9" stroke="#777" stroke-width="2.500" /><path d="M1 1L9 9M9 1L1 9" stroke="#eee" /></svg></button>
          </div>
        </div>
      </main>

      <footer class="status"><span class="ready">Ready</span><span class="cell">1</span><span class="cell c2">2</span><svg width="24" height="14"><path d="M15 1H18V4H15ZM11 5H14V8H11ZM15 5H18V8H15ZM7 9H10V12H7ZM11 9H14V12H11ZM15 9H18V12H15Z" fill="#b4b4b4" /></svg></footer>
    </div>

    <div class="taskbar">
      <button v-for="a in apps" :key="a.n" class="tb" :class="{ run: a.run, active: a.active, sys: a.w }" :aria-label="a.n">
        <svg width="30" height="30" viewBox="-1 -1 30 30"><g v-html="a.s"></g><text v-if="a.pro" x="13" y="28" class="pro">PRO</text></svg>
      </button>
      <div class="tray">
        <button class="tr" aria-label="Show hidden icons"><svg width="18" height="10"><path d="M1 9L9 1L17 9" /></svg></button>
        <button class="tr w42" aria-label="Network"><svg width="17" height="17"><path d="M1 16A15 15 0 0 1 16 1M5 16A11 11 0 0 1 16 5.500M9 16A7 7 0 0 1 16 9" /><circle cx="14" cy="15" r="1.500" fill="#fff" /></svg></button>
        <button class="tr w36" aria-label="Volume"><svg width="22" height="18"><path d="M1 6H4L9 2V16L4 12H1ZM12 6Q14 9 12 12" /><path d="M15 4Q18 9 15 14M18 1Q23 9 18 17" class="dim" /></svg></button>
        <button class="tr w54" aria-label="Ink"><svg width="20" height="20"><path d="M7 10Q1 11 1 15Q2 20 7 17M5 19L7 13L14 1L17 3L11 15ZM14 10Q19 7 19 11" /></svg></button>
        <button class="tr w46" aria-label="Keyboard"><svg width="30" height="17"><path d="M.5 .5H29.500V16.500H.5Z" /><path d="M4 5.500H26M4 9H26" stroke-dasharray="2 2" /><path d="M4 12.500H6M9 12.500H21M24 12.500H26" /></svg></button>
        <button class="clock"><span>22:08</span><span>9/05/2017</span></button>
        <button class="tr w54 act" aria-label="Notifications"><svg width="32" height="32"><path d="M2 2H22V17H17L14 21V17H2Z" fill="#fff" stroke="none" /><path d="M6 6.500H18M6 10.500H18M6 14.500H14" stroke="#000" /><circle cx="21" cy="21" r="10" fill="#2c2d2f" stroke="#888" /></svg><b>1</b></button>
        <i class="peek"></i>
      </div>
    </div>
  </div>
</template>

<style>
body { margin: 0; background: #f2f2f2; }
</style>

<style scoped>
.desktop { position: relative; display: flex; flex-direction: column; height: 100vh; overflow: hidden; font-family: "Open Sans", "Noto Sans", sans-serif; font-size: 14px; color: #222; }
button { font: inherit; color: inherit; background: none; border: 0; padding: 0; margin: 0; display: flex; align-items: center; justify-content: center; }
button, select, input, span { white-space: nowrap; }
svg { display: block; flex: none; overflow: visible; }

.back { position: absolute; inset: 0 0 50px 0; display: flex; flex-direction: column; background: #f5f5f5; overflow: hidden; }
.back-tabs { height: 35px; flex: none; display: flex; padding-left: 16px; background: linear-gradient(#fff, #e4e4e4 18px, #fafafa 35px); border-bottom: 1px solid #b4b4b4; font-size: 15px; }
.back-tab { display: flex; align-items: center; width: 241px; box-sizing: border-box; margin-right: 1px; padding: 0 12px 0 13px; background: #d4d4d4; border: 2px solid #aaa; border-bottom: 0; border-radius: 8px 8px 0 0; color: #555; }
.back-tab.on { background: #f2f2f2; color: #222; }
.bt { flex: 1; overflow: hidden; line-height: 32px; }
.bx { margin-left: 12px; }
.fav { width: 18px; height: 12px; margin-right: 8px; }
.gmail { background: linear-gradient(135deg, #d8352a 30%, #fff 31% 45%, #d8352a 46%); }
.yt { background: #d8352a; border-radius: 4px; }
.doc.doc { background: #fff; }
.fav.doc { border: 1px solid #888; width: 10px; }
.pol { background: #3848a0; }
.fb { background: #5070b0; }
.back-new { width: 34px; margin: 9px 0 0 2px; background: #ccc; border-radius: 4px; }
.back-fill { flex: 1; }
.back-user { width: 30px; background: #aaa; display: flex; justify-content: center; padding-top: 4px; }
.back-ctl { margin: 0 10px 0 36px; }
.back-bar { height: 45px; flex: none; background: #f2f2f2; border-bottom: 1px solid #b0b0b0; }
.back-bar.two { height: 74px; background: #e9e9e9; border-color: #ccc; }
.back-page { flex: 1; display: flex; justify-content: space-between; background: #f6f6f6; }
.mark { width: 5px; height: 34px; margin-top: 117px; background: #d64937; }
.thumb { width: 13px; height: 201px; margin-top: 60px; background: #c1c1c1; }

.win { position: relative; flex: 1; min-height: 0; margin: 17px 16px 0 8px; border: 1px solid #1a7cd2; background: #f0f0f0; display: flex; flex-direction: column; box-shadow: 0 0 10px rgba(0,0,0,.3); }
.title { height: 37px; flex: none; display: flex; background: #fff; }
.app-btn { position: absolute; left: 0; top: 7px; z-index: 2; width: 41px; height: 42px; box-sizing: border-box; border: 1px solid #111; background: linear-gradient(#c8c8c8, #8c8c8c); flex-direction: column; padding-right: 6px; }
.app-btn span { font-size: 9px; line-height: 9px; color: #111; }
.app-caret { position: absolute; right: 1px; top: 20px; }
.qat { display: flex; align-items: center; width: 750px; margin: 7px 0 0 41px; background: linear-gradient(#a8a8a8, #6c6c6c 60%, #545454); border-top: 1px solid #555; box-sizing: border-box; height: 30px; }
.qb { height: 28px; flex: none; }
.qb.dark { width: 32px; background: linear-gradient(#707070, #505050); }
.w16 { width: 17px; } .w22 { width: 22px; } .w30 { width: 30px; } .w34 { width: 34px; }
.qsep { width: 1px; height: 28px; margin: 0 5px 0 6px; background: #9a9a9a; flex: none; }
.combo { display: flex; align-items: center; width: 123px; height: 26px; box-sizing: border-box; padding: 0 3px 0 8px; background: linear-gradient(#f4f4f4, #d2d2d2); color: #000; }
.combo select { flex: 1; min-width: 0; appearance: none; border: 0; background: none; font: inherit; padding: 0; color: #000; }
.combo.ball { padding-left: 4px; }
.orb { width: 18px; height: 18px; margin-right: 5px; background: radial-gradient(circle at 40% 35%, #ddd, #888 60%, #555); }
h1 { flex: 1; margin: 0; padding-left: 18px; font-size: 14px; font-weight: 400; text-align: center; line-height: 37px; color: #000; }
.info { display: flex; align-items: center; width: 572px; box-sizing: border-box; height: 30px; margin-top: 7px; background: linear-gradient(#a8a8a8, #6c6c6c 60%, #545454); border: 1px solid #555; }
.search { flex: 1; min-width: 0; height: 22px; box-sizing: border-box; border: 1px solid #777; background: #fff; font: inherit; padding: 0 4px; }
.user { gap: 7px; padding: 0 2px 0 6px; color: #111; }
.ctl { display: flex; width: 236px; box-sizing: border-box; padding: 0 0 0 60px; }
.ctl button { width: 58px; height: 36px; }
.ctl svg { fill: none; stroke: #000; }

.menu { display: flex; height: 22px; flex: none; padding-left: 55px; background: #404040; color: #fff; }
.menu button { padding: 0 12px; margin-right: 1px; height: 22px; line-height: 22px; }
.menu button.on { background: linear-gradient(#cfcfcf, #fafafa); color: #333; margin: 1px 1px 0 0; height: 21px; line-height: 20px; }
.menu .mini { padding-left: 28px; height: 20px; }

.ribbon { display: flex; flex: none; height: 118px; border-top: 1px solid #fff; border-bottom: 1px solid #777; background: linear-gradient(#d4d4d4, #8c8c8c); }
.panel { box-sizing: border-box; display: flex; flex-direction: column; background: #fff; border-right: 1px solid #aaa; }
.body { height: 95px; display: flex; align-items: flex-start; }
.big { position: relative; flex-direction: column; justify-content: flex-start; padding-top: 5px; line-height: 21px; height: 94px; }
.big svg:first-child { margin-bottom: 5px; }
.under { margin-top: 3px; }
.side { position: absolute; right: 7px; top: 70px; }
.off { color: #b0b0b0; }
.bsep { width: 1px; height: 90px; margin: 3px 3px; background: #c8c8c8; flex: none; }
.bsep.apart { margin-left: 6px; }
.stack { display: flex; flex-direction: column; padding-top: 2px; margin-left: 3px; }
.small { height: 31px; gap: 6px; justify-content: flex-start; }
.small svg + span + svg { margin-left: 4px; }
.tool { width: 29px; height: 27px; margin: 3px 0 0 4px; background: #f4f4f4; border: 1px solid #d0d0d0; box-sizing: border-box; }
.tool.wide { width: 43px; margin-left: 0; gap: 8px; }
.name { flex: 1; margin-right: 1px; display: flex; align-items: center; justify-content: center; gap: 7px; border-top: 1px solid #ccc; background: #eee; color: #333; }

.work { flex: 1; min-height: 0; display: flex; }
.browser { width: 300px; flex: none; box-sizing: border-box; padding: 4px 3px 4px 3px; display: flex; flex-direction: column; border-right: 1px solid #999; font-family: "DejaVu Sans Condensed", "DejaVu Sans", sans-serif; font-size: 13px; font-stretch: condensed; color: #000; }
.grip { display: flex; align-items: center; gap: 5px; height: 11px; padding-left: 1px; }
.grip i { flex: 1; height: 3px; border: 1px solid #999; border-left: 0; }
.grip button { width: 9px; margin-right: 2px; }
.bhead { height: 29px; flex: none; display: flex; align-items: center; justify-content: space-between; padding: 0 5px 0 8px; background: #ababab; color: #fff; }
.btitle { font-weight: 700; gap: 4px; }
.btools { display: flex; align-items: center; gap: 8px; height: 27px; flex: none; padding-left: 4px; }
.btools i { width: 1px; height: 18px; background: #888; }
.tree { flex: 1; margin: 0; padding: 2px 0 0 4px; list-style: none; background: #fff; border: 1px solid #646464; }
.tree li { display: flex; align-items: center; height: 20px; gap: 3px; }
.guide { margin-right: -4px; }

.stage { flex: 1; min-width: 0; display: flex; flex-direction: column; }
.canvas { position: relative; flex: 1; min-height: 0; background: linear-gradient(#2f2f2f, #6a6a6a 50%, #a4a4a4); overflow: hidden; border-right: 2px solid #eee; }
.drawing { width: 100%; height: 100%; }
.note text { fill: #e4e4e4; font-family: "DejaVu Sans Condensed", "DejaVu Sans", sans-serif; font-stretch: condensed; font-size: 12px; }
.triad { position: absolute; left: 36px; bottom: 40px; font-family: "DejaVu Sans Condensed", sans-serif; font-size: 12px; height: 60px; }
.mdi { position: absolute; top: 6px; right: 1px; display: flex; gap: 8px; }
.cube { position: absolute; top: 59px; right: 35px; width: 54px; height: 54px; box-sizing: border-box; border: 1px solid #858585; background: #6f6f6f; display: flex; align-items: center; justify-content: center; box-shadow: inset 0 0 0 10px #767676; color: #4e5058; font-weight: 700; font-size: 11px; font-family: "Liberation Sans", sans-serif; }
.cube span { transform: rotate(180deg); }
.navbar { position: absolute; top: 145px; right: 1px; width: 34px; height: 199px; box-sizing: border-box; border: 2px solid #3a3a3a; border-radius: 5px; background: #858585; box-shadow: inset 0 0 0 1px #999; display: flex; flex-direction: column; align-items: center; }
.navbar i { width: 26px; height: 1px; background: #5a5a5a; margin-bottom: 2px; }
.navbar .dot { align-self: flex-end; margin: 2px 3px 0 0; }
.navbar .wheel { margin: 9px 0 7px; }
.navbar button:not(.dot):not(.wheel) { height: 20px; margin: 2px 0; }
.nc { margin: 2px 0 4px; }
.navbar .foot { margin-top: auto; margin-bottom: 2px; }

.docs { height: 26px; flex: none; display: flex; margin-top: 2px; background: linear-gradient(#d9d9d9, #b0b0b0); border-top: 1px solid #777; border-bottom: 1px solid #000; box-sizing: border-box; color: #000; }
.sq { width: 25px; box-sizing: border-box; background: linear-gradient(#e4e4e4, #a8a8a8); border-right: 2px solid #666; }
.up { width: 24px; padding-bottom: 6px; }
.docs .doc { height: 22px; box-sizing: border-box; border: 1px solid #555; border-top: 0; border-radius: 0 0 6px 6px; background: linear-gradient(#d9d9d9, #bdbdbd); }
.docs .t1 { width: 89px; }
.docs .t2 { width: 84px; }
.docs .on { width: 99px; background: #fff; gap: 6px; }
.doc.on svg { margin-bottom: 4px; }

.status { height: 31px; flex: none; display: flex; align-items: center; background: linear-gradient(#fff, #ddd 50%, #a9a9a9); color: #000; }
.ready { flex: 1; padding-left: 1px; line-height: 27px; padding-top: 2px; }
.cell { width: 24px; height: 27px; line-height: 28px; padding-left: 14px; border-left: 1px solid #ccc; }
.cell.c2 { padding-left: 13px; border-right: 1px solid #ccc; }
.status svg { align-self: flex-end; }

.taskbar { position: relative; height: 50px; flex: none; display: flex; align-items: stretch; background: #010409; color: #fff; }
.tb { width: 62px; box-sizing: border-box; position: relative; }
.tb.sys { width: 60px; }
.tb.sys + .tb:not(.sys) { margin-left: 3px; }
.tb.run::after { content: ""; position: absolute; left: 6px; right: 5px; bottom: 0; height: 3px; background: #76b9ed; }
.tb.active { background: #33373b; }
.tb.active::after { left: 0; right: 0; }
.pro { font-size: 7px; fill: #555; }
.tray { margin-left: auto; display: flex; align-items: center; }
.tr { width: 40px; height: 50px; }
.tr svg { fill: none; stroke: #fff; stroke-width: 1.4; }
.tr .dim { stroke: #777; }
.w42 { width: 42px; } .w36 { width: 37px; } .w54 { width: 54px; } .w46 { width: 46px; }
.clock { width: 96px; height: 48px; flex-direction: column; line-height: 23px; }
.act { position: relative; }
.act b { position: absolute; left: 28px; top: 19px; font-weight: 400; }
.peek { width: 5px; height: 50px; border-left: 1px solid #555; margin-left: 4px; }
</style>
